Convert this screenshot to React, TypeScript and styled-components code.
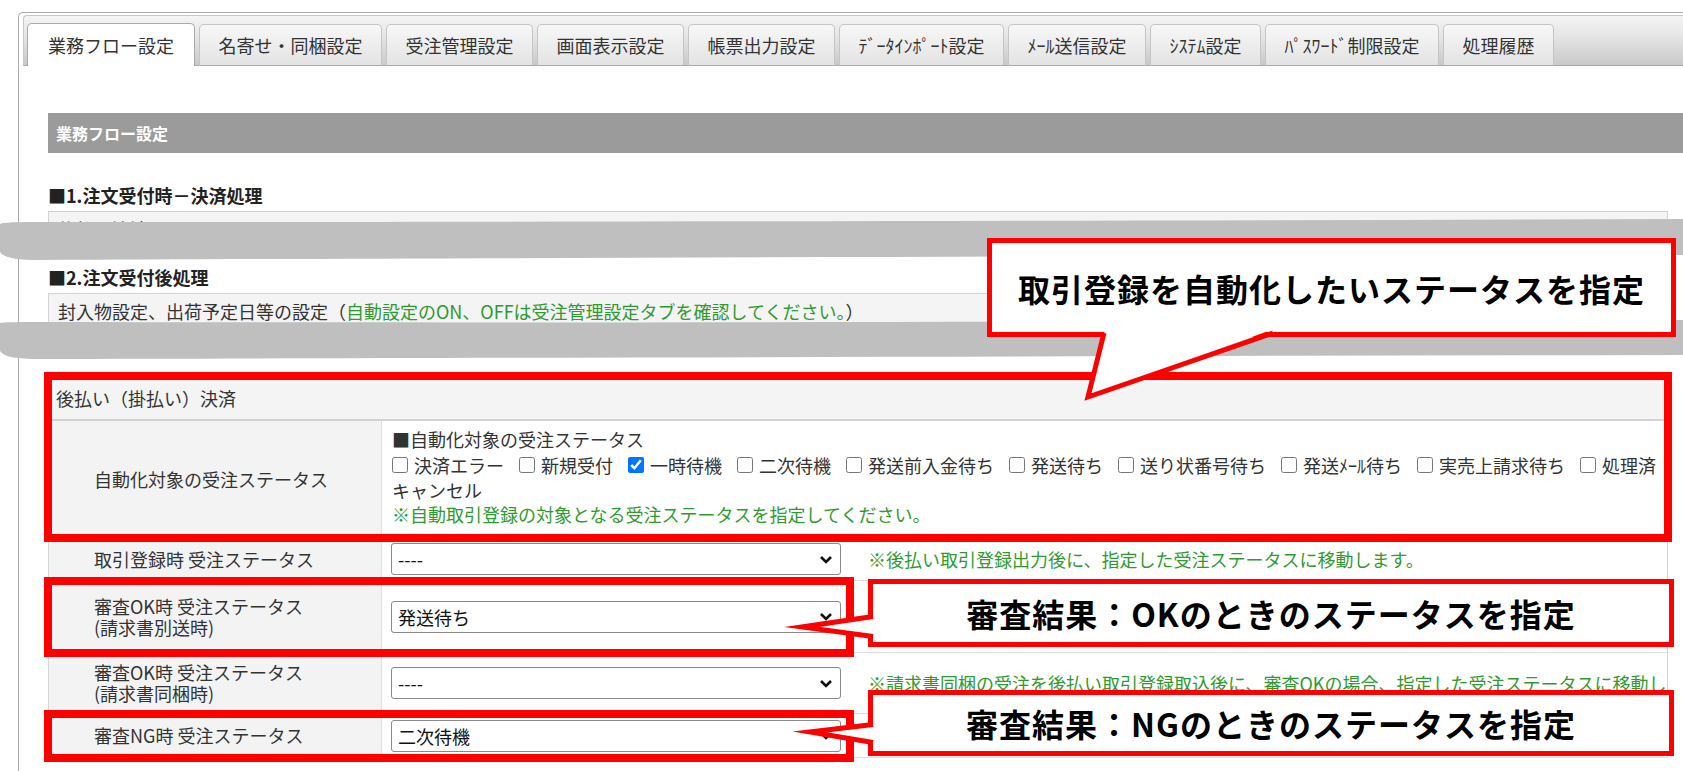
import React from "react";
import styled, { createGlobalStyle } from "styled-components";

const GlobalStyle = createGlobalStyle`
  html, body {
    margin: 0;
    padding: 0;
    background: #fff;
  }
  body {
    overflow: hidden;
    font-family: "Noto Sans CJK JP", "Noto Sans", sans-serif;
    color: #333;
  }
`;

const Page = styled.div`
  position: relative;
  width: 1683px;
  height: 771px;
  overflow: hidden;
`;

const Frame = styled.div`
  margin: 12px 0 0 18px;
  width: 1720px;
  min-height: 800px;
  border: 1px solid #aaa;
  border-right: none;
  border-bottom: none;
  border-radius: 5px 0 0 0;
  padding: 2px 0 0 4px;
`;

const Nav = styled.div`
  display: flex;
  align-items: flex-end;
  gap: 4px;
  height: 49px;
  padding-left: 3px;
  border: 1px solid #c6c6c6;
  border-bottom-color: #aaa;
  border-right: none;
  border-radius: 4px 0 0 0;
  background: linear-gradient(#f4f4f4 0%, #e6e6e6 40%, #c9c9c9 100%);
`;

const Tab = styled.div<{ $active?: boolean }>`
  box-sizing: border-box;
  height: ${(p) => (p.$active ? 43 : 42)}px;
  margin-bottom: -1px;
  padding: 0 ${(p) => (p.$active ? 20 : 18.5)}px;
  display: flex;
  align-items: center;
  border: 1px solid ${(p) => (p.$active ? "#aaa" : "#c5c5c5")};
  border-bottom: ${(p) => (p.$active ? "none" : "1px solid #aaa")};
  border-radius: 5px 5px 0 0;
  background: ${(p) => (p.$active ? "#fff" : "linear-gradient(#f7f7f7, #e3e3e3)")};
  font-size: 18px;
  color: #333;
  white-space: nowrap;
`;

const Panel = styled.div`
  padding: 47px 0 0 25px;
`;

const HeaderBar = styled.div`
  height: 40px;
  display: flex;
  align-items: center;
  padding-left: 8px;
  background: #9b9b9b;
  color: #fff;
  font-size: 16px;
  font-weight: 700;
`;

const Content = styled.div`
  width: 1620px;
`;

const SectionTitle = styled.div<{ $top: number }>`
  margin-top: ${(p) => p.$top}px;
  line-height: 24px;
  font-size: 18px;
  font-weight: 700;
  color: #222;
`;

const InfoBox = styled.div`
  margin-top: 4px;
  padding: 4px 9px;
  line-height: 26px;
  font-size: 18px;
  background: #f4f4f4;
  border: 1px solid #d3d3d3;
`;

const Green = styled.span`
  color: #2f9a2f;
`;

const Table = styled.div`
  margin-top: 47px;
  border-left: 1px solid #d5d5d5;
  border-right: 1px solid #d5d5d5;
  font-size: 18px;
`;

const Highlight = styled.div<{ $w?: number }>`
  position: relative;
  &::after {
    content: "";
    position: absolute;
    top: -4px;
    bottom: -4px;
    left: -5px;
    width: ${(p) => (p.$w ? `${p.$w}px` : "calc(100% + 10px)")};
    box-sizing: border-box;
    border: 8px solid #ff0000;
    z-index: 2;
    pointer-events: none;
  }
`;

const HeadRow = styled.div`
  box-sizing: border-box;
  height: 45px;
  display: flex;
  align-items: center;
  padding-left: 7px;
  background: #f3f4f3;
  border-bottom: 2px solid #d2d2d2;
`;

const Row = styled.div<{ $h: number }>`
  box-sizing: border-box;
  height: ${(p) => p.$h}px;
  display: grid;
  grid-template-columns: 333px 1fr;
  border-bottom: 1px solid #dcdcdc;
`;

const LabelCell = styled.div`
  display: flex;
  flex-direction: column;
  justify-content: center;
  padding-left: 45px;
  line-height: 21px;
  background: #f3f3f3;
  border-right: 1px solid #e0e0e0;
`;

const ValueCell = styled.div`
  display: flex;
  align-items: center;
  padding-left: 9px;
  overflow: hidden;
  white-space: nowrap;
`;

const StatusCell = styled.div`
  padding: 6px 10px 12px;
  line-height: 24px;
  overflow: hidden;
`;

const CheckLine = styled.div`
  display: flex;
  align-items: center;
  height: 27px;
  white-space: nowrap;
`;

const CheckItem = styled.label`
  display: inline-flex;
  align-items: center;
  margin-right: 15px;
`;

const Check = styled.input`
  width: 16px;
  height: 16px;
  margin: 0 6px 0 0;
`;

const SelectBox = styled.div`
  box-sizing: border-box;
  width: 450px;
  height: 32px;
  display: flex;
  align-items: center;
  justify-content: space-between;
  padding: 0 7px 0 6px;
  border: 1px solid #8a8a8a;
  border-radius: 3px;
  background: #fff;
  color: #111;
  flex-shrink: 0;
`;

const Note = styled.span`
  margin-left: 27px;
  color: #2f9a2f;
`;

const Band = styled.svg<{ $top: number }>`
  position: absolute;
  left: 0;
  top: ${(p) => p.$top}px;
  z-index: 1;
`;

const Callout = styled.div<{ $x: number; $y: number; $w: number; $h: number }>`
  position: absolute;
  left: ${(p) => p.$x}px;
  top: ${(p) => p.$y}px;
  width: ${(p) => p.$w}px;
  height: ${(p) => p.$h}px;
  box-sizing: border-box;
  display: flex;
  align-items: center;
  justify-content: center;
  border: 5px solid #ff0000;
  background: #fff;
  color: #000;
  font-size: 32px;
  font-weight: 700;
  letter-spacing: 1px;
  z-index: 3;
`;

const Tail = styled.svg`
  position: absolute;
  left: -5px;
  top: -5px;
  overflow: visible;
`;

const tabs = [
  "業務フロー設定",
  "名寄せ・同梱設定",
  "受注管理設定",
  "画面表示設定",
  "帳票出力設定",
  "ﾃﾞｰﾀｲﾝﾎﾟｰﾄ設定",
  "ﾒｰﾙ送信設定",
  "ｼｽﾃﾑ設定",
  "ﾊﾟｽﾜｰﾄﾞ制限設定",
  "処理履歴",
];

const statuses = [
  "決済エラー",
  "新規受付",
  "一時待機",
  "二次待機",
  "発送前入金待ち",
  "発送待ち",
  "送り状番号待ち",
  "発送ﾒｰﾙ待ち",
  "実売上請求待ち",
  "処理済",
];

function Chevron() {
  return (
    <svg width="14" height="9" viewBox="0 0 14 9">
      <polyline points="2,2 7,7 12,2" fill="none" stroke="#111" strokeWidth="2.6" />
    </svg>
  );
}

function Select({ value }: { value: string }) {
  return (
    <SelectBox>
      <span>{value}</span>
      <Chevron />
    </SelectBox>
  );
}

type Pt = [number, number];

function Pointer({ base1, tip, base2, fill1, fill2 }: { base1: Pt; tip: Pt; base2: Pt; fill1: Pt; fill2: Pt }) {
  const p = (a: Pt) => `${a[0]},${a[1]}`;
  return (
    <Tail width="1" height="1">
      <polygon points={`${p(fill1)} ${p(tip)} ${p(fill2)}`} fill="#fff" />
      <polyline
        points={`${p(base1)} ${p(tip)} ${p(base2)}`}
        fill="none"
        stroke="#ff0000"
        strokeWidth="5"
        strokeLinejoin="miter"
        strokeMiterlimit="20"
      />
    </Tail>
  );
}

export default function App() {
  return (
    <Page>
      <GlobalStyle />
      <Frame>
        <Nav>
          {tabs.map((t, i) => (
            <Tab key={t} $active={i === 0}>
              {t}
            </Tab>
          ))}
        </Nav>
        <Panel>
          <HeaderBar>業務フロー設定</HeaderBar>
          <Content>
            <SectionTitle $top={30}>■1.注文受付時－決済処理</SectionTitle>
            <InfoBox>後払い決済</InfoBox>
            <SectionTitle $top={18}>■2.注文受付後処理</SectionTitle>
            <InfoBox>
              封入物設定、出荷予定日等の設定（<Green>自動設定のON、OFFは受注管理設定タブを確認してください。</Green>）
            </InfoBox>

            <Table>
              <Highlight>
                <HeadRow>後払い（掛払い）決済</HeadRow>
                <Row $h={117}>
                  <LabelCell>自動化対象の受注ステータス</LabelCell>
                  <StatusCell>
                    <div>■自動化対象の受注ステータス</div>
                    <CheckLine>
                      {statuses.map((s) => (
                        <CheckItem key={s}>
                          <Check type="checkbox" readOnly checked={s === "一時待機"} />
                          {s}
                        </CheckItem>
                      ))}
                    </CheckLine>
                    <div>キャンセル</div>
                    <Green>※自動取引登録の対象となる受注ステータスを指定してください。</Green>
                  </StatusCell>
                </Row>
              </Highlight>
              <Row $h={43}>
                <LabelCell>取引登録時 受注ステータス</LabelCell>
                <ValueCell>
                  <Select value="----" />
                  <Note>※後払い取引登録出力後に、指定した受注ステータスに移動します。</Note>
                </ValueCell>
              </Row>
              <Highlight $w={810}>
                <Row $h={72}>
                  <LabelCell>
                    <div>審査OK時 受注ステータス</div>
                    <div>(請求書別送時)</div>
                  </LabelCell>
                  <ValueCell>
                    <Select value="発送待ち" />
                  </ValueCell>
                </Row>
              </Highlight>
              <Row $h={61}>
                <LabelCell>
                  <div>審査OK時 受注ステータス</div>
                  <div>(請求書同梱時)</div>
                </LabelCell>
                <ValueCell>
                  <Select value="----" />
                  <Note>※請求書同梱の受注を後払い取引登録取込後に、審査OKの場合、指定した受注ステータスに移動します。</Note>
                </ValueCell>
              </Row>
              <Highlight $w={810}>
                <Row $h={44}>
                  <LabelCell>審査NG時 受注ステータス</LabelCell>
                  <ValueCell>
                    <Select value="二次待機" />
                  </ValueCell>
                </Row>
              </Highlight>
            </Table>
          </Content>
        </Panel>
      </Frame>

      <Band $top={218} width="1683" height="44" viewBox="0 0 1683 44">
        <path
          d="M0,6 C4,4 20,4 60,4 C500,4 1100,3 1683,1 L1683,37 C1100,38 500,40 40,42 C16,42 4,40 0,34 Z"
          fill="#bfbfbf"
        />
      </Band>
      <Band $top={318} width="1683" height="44" viewBox="0 0 1683 44">
        <path
          d="M0,5 C4,4 20,4 60,4 C500,5 1100,4 1683,2 L1683,37 C1100,38 500,40 40,41 C16,41 4,39 0,33 Z"
          fill="#bfbfbf"
        />
      </Band>

      <Callout $x={987} $y={238} $w={689} $h={99}>
        取引登録を自動化したいステータスを指定
        <Pointer base1={[117, 95]} tip={[101, 159]} base2={[286, 95]} fill1={[118, 92]} fill2={[284, 92]} />
      </Callout>
      <Callout $x={868} $y={579} $w={806} $h={68}>
        審査結果：OKのときのステータスを指定
        <Pointer base1={[5, 37.5]} tip={[-66, 48]} base2={[5, 57.5]} fill1={[7, 37]} fill2={[7, 58]} />
      </Callout>
      <Callout $x={868} $y={690} $w={806} $h={66}>
        審査結果：NGのときのステータスを指定
        <Pointer base1={[5, 34.5]} tip={[-58, 42]} base2={[5, 52.5]} fill1={[7, 34]} fill2={[7, 53]} />
      </Callout>
    </Page>
  );
}
